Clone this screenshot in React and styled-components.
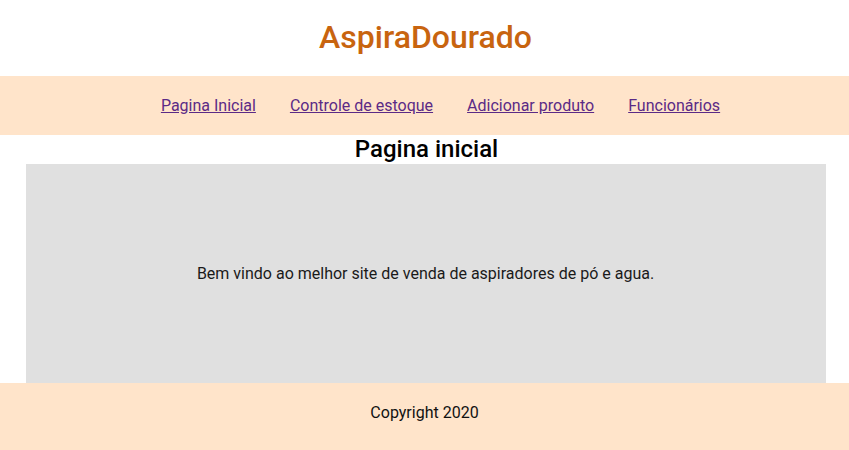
import React from 'react'
import styled, { createGlobalStyle } from 'styled-components'

const GlobalStyle = createGlobalStyle`
  html, body {
    margin: 0;
    padding: 0;
    background: #ffffff;
    font-family: Roboto, "Liberation Sans", sans-serif;
  }
`

const Page = styled.div`
  display: flex;
  flex-direction: column;
  min-height: 450px;
`

const Header = styled.header`
  height: 76px;
  display: flex;
  align-items: center;
  justify-content: center;
`

const Logo = styled.h1`
  margin: 0;
  font-size: 32px;
  font-weight: 500;
  color: #c8640f;
  padding-left: 2px;
  padding-bottom: 2px;
`

const Nav = styled.nav`
  height: 59px;
  background-color: #ffe4ca;
  display: flex;
  align-items: center;
  justify-content: center;
  gap: 34px;
  padding-left: 32px;
  padding-bottom: 1px;
  box-sizing: border-box;
`

const NavLink = styled.a`
  font-size: 16px;
  color: #5b2a86;
  text-decoration: underline;
`

const Main = styled.main`
  flex: 1;
  display: flex;
  flex-direction: column;
  align-items: center;
  padding-left: 2px;
`

const Title = styled.h2`
  margin: 0;
  font-size: 24px;
  font-weight: 500;
  line-height: 29px;
  color: #000;
  padding-left: 2px;
`

const Content = styled.section`
  width: 800px;
  height: 219px;
  background-color: #e0e0e0;
  display: flex;
  align-items: center;
  justify-content: center;
`

const Text = styled.p`
  margin: 0;
  font-size: 16px;
  color: #1a1a1a;
`

const Footer = styled.footer`
  height: 67px;
  background-color: #ffe4ca;
  display: flex;
  align-items: center;
  justify-content: center;
  box-sizing: border-box;
  padding-bottom: 8px;
  font-size: 16px;
  color: #111;
`

const links = ['Pagina Inicial', 'Controle de estoque', 'Adicionar produto', 'Funcionários']

const App = () => {
  return (
    <Page>
      <GlobalStyle />
      <Header>
        <Logo>AspiraDourado</Logo>
      </Header>
      <Nav>
        {
          links.map(link => (
            <NavLink key={link} href="#">{link}</NavLink>
          ))
        }
      </Nav>
      <Main>
        <Title>Pagina inicial</Title>
        <Content>
          <Text>Bem vindo ao melhor site de venda de aspiradores de pó e agua.</Text>
        </Content>
      </Main>
      <Footer>Copyright 2020</Footer>
    </Page>
  )
}

export default App
